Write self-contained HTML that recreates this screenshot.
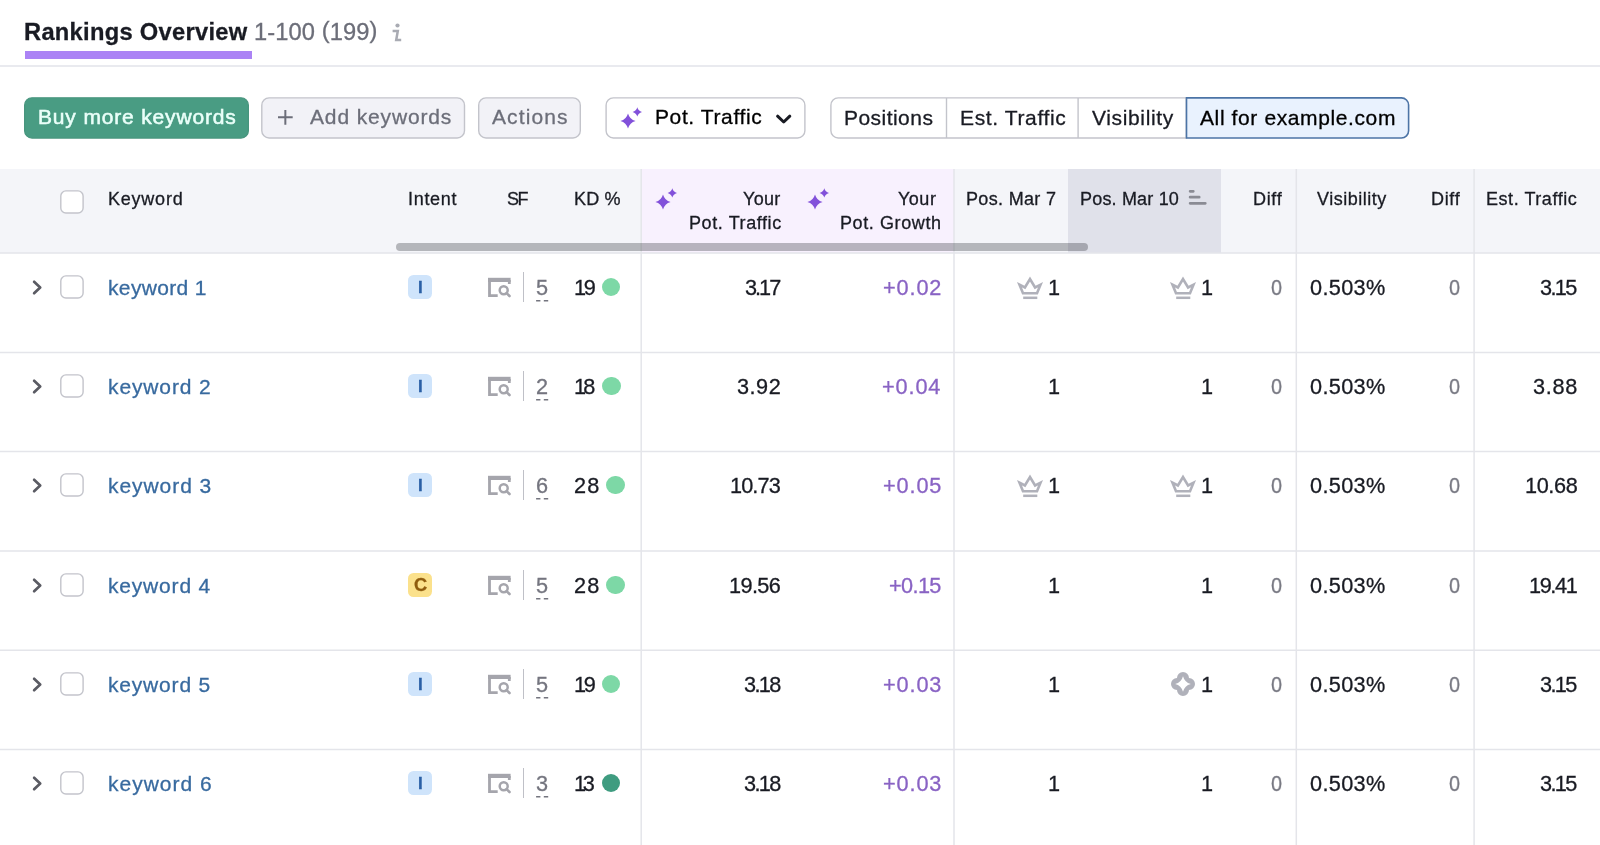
<!DOCTYPE html>
<html lang="en"><head><meta charset="utf-8"><title>Rankings Overview</title>
<style>
html,body{margin:0;padding:0;background:#fff}
body{width:1600px;height:845px;overflow:hidden;position:relative;font-family:"Liberation Sans",sans-serif;color:#191b23}
*{box-sizing:border-box}
.t{position:absolute;white-space:pre;margin:0;padding:0;text-decoration:none;will-change:transform;-webkit-text-stroke:0.3px currentColor}
.abs{position:absolute}
.btn{border:0;background:none;padding:0;margin:0;font-family:inherit;text-align:left;overflow:visible}
.badge{position:absolute;width:24px;height:24px;border-radius:5.5px}
.dot{position:absolute;width:18.4px;height:18.4px;border-radius:50%}
svg{position:absolute;overflow:visible}
</style></head>
<body>
<header><h1 class="t" style="top:18.0px;font-size:23.7px;line-height:28px;font-weight:700;letter-spacing:0.29px;left:24.3px;">Rankings Overview</h1><span class="t" style="top:18.0px;font-size:23.7px;line-height:28px;color:#6c6e79;letter-spacing:0.10px;left:254.0px;">1-100 <span style="position:relative;top:-2px">(</span>199<span style="position:relative;top:-2px">)</span></span><svg style="left:391px;top:22px" width="12" height="21" viewBox="0 0 12 21"><circle cx="6.5" cy="3.5" r="2.1" fill="#a9abb3"/><path d="M1.6 9H6.8L5.2 18H10.2" stroke="#a9abb3" stroke-width="2.5" fill="none"/></svg><div class="abs" style="left:25px;top:51px;width:227px;height:7.5px;background:#ab83f5"></div><div class="abs" style="left:0;top:65px;width:1600px;height:2px;background:#e9eaef"></div></header>
<nav><button class="btn" style="position:absolute;left:24px;top:97px;width:225px;height:42px"><svg width="225" height="42" viewBox="0 0 225 42" style="left:0;top:0"><rect x="0.60" y="0.75" width="223.80" height="40.30" rx="7.40" fill="#499c83" stroke="#48957e" stroke-width="1.2"/></svg><span class="t" style="top:7.0px;font-size:21px;line-height:25px;color:#eafff9;letter-spacing:0.84px;left:13.5px;-webkit-text-stroke:0.55px #eafff9;">Buy more keywords</span></button><button class="btn" style="position:absolute;left:261px;top:97px;width:205px;height:42px"><svg width="205" height="42" viewBox="0 0 205 42" style="left:0;top:0"><rect x="0.80" y="0.85" width="202.70" height="40.10" rx="7.30" fill="#f2f2f7" stroke="#c3c4cb" stroke-width="1.4"/></svg><svg style="left:16.5px;top:13.3px" width="14.7" height="14.7" viewBox="0 0 14.7 14.7"><path d="M7.35 0V14.7M0 7.35H14.7" stroke="#6c6e79" stroke-width="2" fill="none"/></svg><span class="t" style="top:7.0px;font-size:21px;line-height:25px;color:#6c6e79;letter-spacing:0.86px;left:49.0px;">Add keywords</span></button><button class="btn" style="position:absolute;left:478px;top:97px;width:103px;height:42px"><svg width="103" height="42" viewBox="0 0 103 42" style="left:0;top:0"><rect x="0.70" y="0.85" width="101.60" height="40.10" rx="7.30" fill="#f2f2f7" stroke="#c3c4cb" stroke-width="1.4"/></svg><span class="t" style="top:7.0px;font-size:21px;line-height:25px;color:#6c6e79;letter-spacing:1.10px;left:14.0px;">Actions</span></button><button class="btn" style="position:absolute;left:605px;top:97px;width:201px;height:42px"><svg width="201" height="42" viewBox="0 0 201 42" style="left:0;top:0"><rect x="1.10" y="0.85" width="198.80" height="40.10" rx="7.30" fill="#fff" stroke="#c3c4cb" stroke-width="1.4"/></svg><svg style="left:14.6px;top:9.0px" width="23" height="23" viewBox="0 0 23 23"><path d="M8.00 7.40 Q9.67 13.33 15.60 15.00 Q9.67 16.67 8.00 22.60 Q6.33 16.67 0.40 15.00 Q6.33 13.33 8.00 7.40Z M17.30 1.20 Q18.33 4.87 22.00 5.90 Q18.33 6.93 17.30 10.60 Q16.27 6.93 12.60 5.90 Q16.27 4.87 17.30 1.20Z" fill="#8251da"/></svg><span class="t" style="top:7.0px;font-size:21px;line-height:25px;letter-spacing:0.61px;left:50.0px;">Pot. Traffic</span><svg style="left:171.0px;top:17.0px" width="16" height="10" viewBox="0 0 16 10"><path d="M1.6 2.2L7.7 8L13.8 2.2" stroke="#191b23" stroke-width="3" fill="none" stroke-linecap="round" stroke-linejoin="round"/></svg></button><div role="group"><div style="position:absolute;left:830px;top:97px;width:357px;height:42px"><svg width="357" height="42" viewBox="0 0 357 42" style="left:0;top:0"><path d="M8.20 0.85 H356.30 V40.95 H8.20 A7.30 7.30 0 0 1 0.90 33.65 V8.15 A7.30 7.30 0 0 1 8.20 0.85 Z" fill="#fff" stroke="#c3c4cb" stroke-width="1.4"/></svg><span class="t" style="top:8.0px;font-size:21px;line-height:25px;letter-spacing:0.46px;left:14.0px;">Positions</span><svg style="left:115.0px;top:1.0px" width="3" height="40" viewBox="0 0 3 40"><path d="M1.5 0V40" stroke="#c3c4cb" stroke-width="1.4"/></svg><span class="t" style="top:8.0px;font-size:21px;line-height:25px;letter-spacing:0.63px;left:129.6px;">Est. Traffic</span><svg style="left:246.0px;top:1.0px" width="4" height="40" viewBox="0 0 4 40"><path d="M2.1 0V40" stroke="#c3c4cb" stroke-width="1.4"/></svg><span class="t" style="top:8.0px;font-size:21px;line-height:25px;letter-spacing:0.64px;left:261.5px;">Visibility</span></div><button class="btn" style="position:absolute;left:1185px;top:97px;width:225px;height:42px"><svg width="225" height="42" viewBox="0 0 225 42" style="left:0;top:0"><path d="M1.50 0.85 H216.40 A7.20 7.20 0 0 1 223.60 8.05 V33.75 A7.20 7.20 0 0 1 216.40 40.95 H1.50 V0.85 Z" fill="#e9f2fe" stroke="#4c74a6" stroke-width="1.6"/></svg><span class="t" style="top:8.0px;font-size:21px;line-height:25px;letter-spacing:0.61px;left:15.0px;">All for example.com</span></button></div></nav>
<main><div class="abs" style="left:0;top:169px;width:1600px;height:84px;background:#f4f5f9"></div><div class="abs" style="left:641px;top:169px;width:313px;height:84px;background:#f8f1fe"></div><div class="abs" style="left:1068px;top:169px;width:153px;height:84px;background:#e0e1ea"></div><svg style="left:0;top:0" width="1600" height="845" viewBox="0 0 1600 845"><path d="M0 253.1H1600M0 352.4H1600M0 451.6H1600M0 550.9H1600M0 650.2H1600M0 749.4H1600M641.2 169V845M954.0 169V845M1296.3 169V845M1474.1 169V845" stroke="#e4e5ea" stroke-width="1.5" fill="none"/></svg><div style="position:absolute;left:60px;top:190px;width:24px;height:24px"><svg width="24" height="24" viewBox="0 0 24 24" style="left:0;top:0"><rect x="0.80" y="0.90" width="22.30" height="22.10" rx="5.10" fill="#fff" stroke="#c3c4cb" stroke-width="1.4"/></svg></div><span class="t" style="top:188.0px;font-size:18px;line-height:22px;letter-spacing:0.77px;left:108.0px;">Keyword</span><span class="t" style="top:188.0px;font-size:18px;line-height:22px;letter-spacing:0.70px;left:407.5px;">Intent</span><span class="t" style="top:188.0px;font-size:18px;line-height:22px;letter-spacing:-1.50px;left:506.5px;">SF</span><span class="t" style="top:188.0px;font-size:18px;line-height:22px;letter-spacing:0.17px;left:574.0px;">KD %</span><svg style="left:654.7px;top:186.7px" width="23" height="23" viewBox="0 0 23 23"><path d="M8.00 7.40 Q9.67 13.33 15.60 15.00 Q9.67 16.67 8.00 22.60 Q6.33 16.67 0.40 15.00 Q6.33 13.33 8.00 7.40Z M17.30 1.20 Q18.33 4.87 22.00 5.90 Q18.33 6.93 17.30 10.60 Q16.27 6.93 12.60 5.90 Q16.27 4.87 17.30 1.20Z" fill="#8251da"/></svg><span class="t" style="top:188.0px;font-size:18px;line-height:22px;letter-spacing:0.33px;left:743.0px;">Your</span><span class="t" style="top:212.0px;font-size:18px;line-height:22px;letter-spacing:0.59px;left:688.5px;">Pot. Traffic</span><svg style="left:806.5px;top:186.7px" width="23" height="23" viewBox="0 0 23 23"><path d="M8.00 7.40 Q9.67 13.33 15.60 15.00 Q9.67 16.67 8.00 22.60 Q6.33 16.67 0.40 15.00 Q6.33 13.33 8.00 7.40Z M17.30 1.20 Q18.33 4.87 22.00 5.90 Q18.33 6.93 17.30 10.60 Q16.27 6.93 12.60 5.90 Q16.27 4.87 17.30 1.20Z" fill="#8251da"/></svg><span class="t" style="top:188.0px;font-size:18px;line-height:22px;letter-spacing:0.50px;left:897.5px;">Your</span><span class="t" style="top:212.0px;font-size:18px;line-height:22px;letter-spacing:0.60px;left:840.0px;">Pot. Growth</span><span class="t" style="top:188.0px;font-size:18px;line-height:22px;letter-spacing:0.33px;left:965.5px;">Pos. Mar 7</span><span class="t" style="top:188.0px;font-size:18px;line-height:22px;letter-spacing:0.18px;left:1079.5px;">Pos. Mar 10</span><svg style="left:1188.7px;top:190px" width="18" height="15" viewBox="0 0 18 15"><path d="M1.1 1.3H4.3M1.1 7.2H10.2M1.1 13.3H16.3" stroke="#8a8b94" stroke-width="2.7" stroke-linecap="round" fill="none"/></svg><span class="t" style="top:188.0px;font-size:18px;line-height:22px;letter-spacing:0.67px;left:1253.0px;">Diff</span><span class="t" style="top:188.0px;font-size:18px;line-height:22px;letter-spacing:0.50px;left:1316.5px;">Visibility</span><span class="t" style="top:188.0px;font-size:18px;line-height:22px;letter-spacing:0.67px;left:1431.0px;">Diff</span><span class="t" style="top:188.0px;font-size:18px;line-height:22px;letter-spacing:0.55px;left:1486.0px;">Est. Traffic</span><div class="abs" style="left:396px;top:242.5px;width:692px;height:8.5px;border-radius:5px;background:rgba(25,27,35,.29)"></div><section><svg style="left:32px;top:280px" width="11" height="15" viewBox="0 0 11 15"><path d="M2.1 1.8L8.2 7.5L2.1 13.2" stroke="#5a5b63" stroke-width="2.7" fill="none" stroke-linecap="round" stroke-linejoin="round"/></svg><div style="position:absolute;left:60px;top:275px;width:24px;height:24px"><svg width="24" height="24" viewBox="0 0 24 24" style="left:0;top:0"><rect x="0.80" y="0.90" width="22.30" height="22.10" rx="5.10" fill="#fff" stroke="#c3c4cb" stroke-width="1.4"/></svg></div><a class="t" style="top:275.0px;font-size:21px;line-height:25px;color:#386a9f;letter-spacing:0.35px;left:108.0px;">keyword 1</a><div class="badge" style="left:408px;top:275px;background:#cfe4fb"></div><span class="t" style="top:278.0px;font-size:17px;line-height:20px;color:#2a5fa5;font-weight:700;left:417.6px;">I</span><svg style="left:488px;top:278px" width="23" height="19" viewBox="0 0 23 19"><path d="M0 1.9H22.6" stroke="#a5a5ac" stroke-width="4.2"/><path d="M1.5 2V17.6H9.7M21.3 2V6" stroke="#a5a5ac" stroke-width="2.8" fill="none"/><circle cx="15.7" cy="12.2" r="4" stroke="#a5a5ac" stroke-width="2.5" fill="none"/><path d="M18.6 15.1L21.5 18" stroke="#a5a5ac" stroke-width="2.6" stroke-linecap="round"/></svg><div class="abs" style="left:523px;top:272px;width:1px;height:30px;background:#bfc0c7"></div><span class="t" style="top:275.0px;font-size:21.7px;line-height:26px;color:#74757f;left:535.7px;">5</span><svg style="left:536px;top:300px" width="13" height="2" viewBox="0 0 13 2"><path d="M0.1 0.8H4.4M7.8 0.8H12.2" stroke="#74757f" stroke-width="1.6"/></svg><span class="t" style="top:275.0px;font-size:21.7px;line-height:26px;letter-spacing:-2.30px;left:573.8px;">19</span><div class="dot" style="left:601.8px;top:278.1px;background:#7dd8a6"></div><span class="t" style="top:275.0px;font-size:21.7px;line-height:26px;letter-spacing:-2.00px;left:744.5px;">3.17</span><span class="t" style="top:275.0px;font-size:21.7px;line-height:26px;color:#8963c4;letter-spacing:0.88px;left:882.5px;">+0.02</span><svg style="left:1018px;top:277px" width="24" height="22" viewBox="0 0 24 22"><path d="M1.5 7.7 L6.9 10.5 L12 2.1 L17.1 10.5 L22.5 7.7 L19 16.3 H5 Z" fill="none" stroke="#b0b1ba" stroke-width="2.6" stroke-linejoin="miter"/><path d="M5.2 20.8H19.3" stroke="#b0b1ba" stroke-width="2.5" fill="none"/></svg><span class="t" style="top:275.0px;font-size:21.7px;line-height:26px;left:1047.7px;">1</span><svg style="left:1171px;top:277px" width="24" height="22" viewBox="0 0 24 22"><path d="M1.5 7.7 L6.9 10.5 L12 2.1 L17.1 10.5 L22.5 7.7 L19 16.3 H5 Z" fill="none" stroke="#b0b1ba" stroke-width="2.6" stroke-linejoin="miter"/><path d="M5.2 20.8H19.3" stroke="#b0b1ba" stroke-width="2.5" fill="none"/></svg><span class="t" style="top:275.0px;font-size:21.7px;line-height:26px;left:1200.6px;">1</span><span class="t" style="top:275.0px;font-size:21.7px;line-height:26px;color:#74757f;left:1271.0px;transform:scaleX(0.917);transform-origin:0 0;">0</span><span class="t" style="top:275.0px;font-size:21.7px;line-height:26px;letter-spacing:0.34px;left:1310.0px;">0.503%</span><span class="t" style="top:275.0px;font-size:21.7px;line-height:26px;color:#74757f;left:1449.0px;transform:scaleX(0.917);transform-origin:0 0;">0</span><span class="t" style="top:275.0px;font-size:21.7px;line-height:26px;letter-spacing:-1.67px;left:1540.0px;">3.15</span></section>
<section><svg style="left:32px;top:379px" width="11" height="15" viewBox="0 0 11 15"><path d="M2.1 1.8L8.2 7.5L2.1 13.2" stroke="#5a5b63" stroke-width="2.7" fill="none" stroke-linecap="round" stroke-linejoin="round"/></svg><div style="position:absolute;left:60px;top:374px;width:24px;height:24px"><svg width="24" height="24" viewBox="0 0 24 24" style="left:0;top:0"><rect x="0.80" y="0.90" width="22.30" height="22.10" rx="5.10" fill="#fff" stroke="#c3c4cb" stroke-width="1.4"/></svg></div><a class="t" style="top:374.0px;font-size:21px;line-height:25px;color:#386a9f;letter-spacing:0.88px;left:108.0px;">keyword 2</a><div class="badge" style="left:408px;top:374px;background:#cfe4fb"></div><span class="t" style="top:377.0px;font-size:17px;line-height:20px;color:#2a5fa5;font-weight:700;left:417.6px;">I</span><svg style="left:488px;top:377px" width="23" height="19" viewBox="0 0 23 19"><path d="M0 1.9H22.6" stroke="#a5a5ac" stroke-width="4.2"/><path d="M1.5 2V17.6H9.7M21.3 2V6" stroke="#a5a5ac" stroke-width="2.8" fill="none"/><circle cx="15.7" cy="12.2" r="4" stroke="#a5a5ac" stroke-width="2.5" fill="none"/><path d="M18.6 15.1L21.5 18" stroke="#a5a5ac" stroke-width="2.6" stroke-linecap="round"/></svg><div class="abs" style="left:523px;top:371px;width:1px;height:30px;background:#bfc0c7"></div><span class="t" style="top:374.0px;font-size:21.7px;line-height:26px;color:#74757f;left:535.7px;">2</span><svg style="left:536px;top:399px" width="13" height="2" viewBox="0 0 13 2"><path d="M0.1 0.8H4.4M7.8 0.8H12.2" stroke="#74757f" stroke-width="1.6"/></svg><span class="t" style="top:374.0px;font-size:21.7px;line-height:26px;letter-spacing:-2.80px;left:573.8px;">18</span><div class="dot" style="left:602.3px;top:377.1px;background:#7dd8a6"></div><span class="t" style="top:374.0px;font-size:21.7px;line-height:26px;letter-spacing:0.50px;left:737.0px;">3.92</span><span class="t" style="top:374.0px;font-size:21.7px;line-height:26px;color:#8963c4;letter-spacing:0.88px;left:881.5px;">+0.04</span><span class="t" style="top:374.0px;font-size:21.7px;line-height:26px;left:1047.7px;">1</span><span class="t" style="top:374.0px;font-size:21.7px;line-height:26px;left:1200.6px;">1</span><span class="t" style="top:374.0px;font-size:21.7px;line-height:26px;color:#74757f;left:1271.0px;transform:scaleX(0.917);transform-origin:0 0;">0</span><span class="t" style="top:374.0px;font-size:21.7px;line-height:26px;letter-spacing:0.34px;left:1310.0px;">0.503%</span><span class="t" style="top:374.0px;font-size:21.7px;line-height:26px;color:#74757f;left:1449.0px;transform:scaleX(0.917);transform-origin:0 0;">0</span><span class="t" style="top:374.0px;font-size:21.7px;line-height:26px;letter-spacing:0.67px;left:1533.0px;">3.88</span></section>
<section><svg style="left:32px;top:478px" width="11" height="15" viewBox="0 0 11 15"><path d="M2.1 1.8L8.2 7.5L2.1 13.2" stroke="#5a5b63" stroke-width="2.7" fill="none" stroke-linecap="round" stroke-linejoin="round"/></svg><div style="position:absolute;left:60px;top:473px;width:24px;height:24px"><svg width="24" height="24" viewBox="0 0 24 24" style="left:0;top:0"><rect x="0.80" y="0.90" width="22.30" height="22.10" rx="5.10" fill="#fff" stroke="#c3c4cb" stroke-width="1.4"/></svg></div><a class="t" style="top:473.0px;font-size:21px;line-height:25px;color:#386a9f;letter-spacing:0.94px;left:108.0px;">keyword 3</a><div class="badge" style="left:408px;top:473px;background:#cfe4fb"></div><span class="t" style="top:476.0px;font-size:17px;line-height:20px;color:#2a5fa5;font-weight:700;left:417.6px;">I</span><svg style="left:488px;top:476px" width="23" height="19" viewBox="0 0 23 19"><path d="M0 1.9H22.6" stroke="#a5a5ac" stroke-width="4.2"/><path d="M1.5 2V17.6H9.7M21.3 2V6" stroke="#a5a5ac" stroke-width="2.8" fill="none"/><circle cx="15.7" cy="12.2" r="4" stroke="#a5a5ac" stroke-width="2.5" fill="none"/><path d="M18.6 15.1L21.5 18" stroke="#a5a5ac" stroke-width="2.6" stroke-linecap="round"/></svg><div class="abs" style="left:523px;top:470px;width:1px;height:30px;background:#bfc0c7"></div><span class="t" style="top:473.0px;font-size:21.7px;line-height:26px;color:#74757f;left:535.7px;">6</span><svg style="left:536px;top:498px" width="13" height="2" viewBox="0 0 13 2"><path d="M0.1 0.8H4.4M7.8 0.8H12.2" stroke="#74757f" stroke-width="1.6"/></svg><span class="t" style="top:473.0px;font-size:21.7px;line-height:26px;letter-spacing:1.20px;left:573.8px;">28</span><div class="dot" style="left:606.3px;top:476.1px;background:#7dd8a6"></div><span class="t" style="top:473.0px;font-size:21.7px;line-height:26px;letter-spacing:-0.88px;left:730.0px;">10.73</span><span class="t" style="top:473.0px;font-size:21.7px;line-height:26px;color:#8963c4;letter-spacing:0.88px;left:882.5px;">+0.05</span><svg style="left:1018px;top:475px" width="24" height="22" viewBox="0 0 24 22"><path d="M1.5 7.7 L6.9 10.5 L12 2.1 L17.1 10.5 L22.5 7.7 L19 16.3 H5 Z" fill="none" stroke="#b0b1ba" stroke-width="2.6" stroke-linejoin="miter"/><path d="M5.2 20.8H19.3" stroke="#b0b1ba" stroke-width="2.5" fill="none"/></svg><span class="t" style="top:473.0px;font-size:21.7px;line-height:26px;left:1047.7px;">1</span><svg style="left:1171px;top:475px" width="24" height="22" viewBox="0 0 24 22"><path d="M1.5 7.7 L6.9 10.5 L12 2.1 L17.1 10.5 L22.5 7.7 L19 16.3 H5 Z" fill="none" stroke="#b0b1ba" stroke-width="2.6" stroke-linejoin="miter"/><path d="M5.2 20.8H19.3" stroke="#b0b1ba" stroke-width="2.5" fill="none"/></svg><span class="t" style="top:473.0px;font-size:21.7px;line-height:26px;left:1200.6px;">1</span><span class="t" style="top:473.0px;font-size:21.7px;line-height:26px;color:#74757f;left:1271.0px;transform:scaleX(0.917);transform-origin:0 0;">0</span><span class="t" style="top:473.0px;font-size:21.7px;line-height:26px;letter-spacing:0.34px;left:1310.0px;">0.503%</span><span class="t" style="top:473.0px;font-size:21.7px;line-height:26px;color:#74757f;left:1449.0px;transform:scaleX(0.917);transform-origin:0 0;">0</span><span class="t" style="top:473.0px;font-size:21.7px;line-height:26px;letter-spacing:-0.38px;left:1524.5px;">10.68</span></section>
<section><svg style="left:32px;top:578px" width="11" height="15" viewBox="0 0 11 15"><path d="M2.1 1.8L8.2 7.5L2.1 13.2" stroke="#5a5b63" stroke-width="2.7" fill="none" stroke-linecap="round" stroke-linejoin="round"/></svg><div style="position:absolute;left:60px;top:573px;width:24px;height:24px"><svg width="24" height="24" viewBox="0 0 24 24" style="left:0;top:0"><rect x="0.80" y="0.90" width="22.30" height="22.10" rx="5.10" fill="#fff" stroke="#c3c4cb" stroke-width="1.4"/></svg></div><a class="t" style="top:573.0px;font-size:21px;line-height:25px;color:#386a9f;letter-spacing:0.81px;left:108.0px;">keyword 4</a><div class="badge" style="left:408px;top:573px;background:#fbe18c"></div><span class="t" style="top:574.0px;font-size:18.2px;line-height:22px;color:#8f5c0e;font-weight:700;left:414.0px;">C</span><svg style="left:488px;top:576px" width="23" height="19" viewBox="0 0 23 19"><path d="M0 1.9H22.6" stroke="#a5a5ac" stroke-width="4.2"/><path d="M1.5 2V17.6H9.7M21.3 2V6" stroke="#a5a5ac" stroke-width="2.8" fill="none"/><circle cx="15.7" cy="12.2" r="4" stroke="#a5a5ac" stroke-width="2.5" fill="none"/><path d="M18.6 15.1L21.5 18" stroke="#a5a5ac" stroke-width="2.6" stroke-linecap="round"/></svg><div class="abs" style="left:523px;top:570px;width:1px;height:30px;background:#bfc0c7"></div><span class="t" style="top:573.0px;font-size:21.7px;line-height:26px;color:#74757f;left:535.7px;">5</span><svg style="left:536px;top:598px" width="13" height="2" viewBox="0 0 13 2"><path d="M0.1 0.8H4.4M7.8 0.8H12.2" stroke="#74757f" stroke-width="1.6"/></svg><span class="t" style="top:573.0px;font-size:21.7px;line-height:26px;letter-spacing:1.20px;left:573.8px;">28</span><div class="dot" style="left:606.3px;top:576.1px;background:#7dd8a6"></div><span class="t" style="top:573.0px;font-size:21.7px;line-height:26px;letter-spacing:-0.62px;left:729.0px;">19.56</span><span class="t" style="top:573.0px;font-size:21.7px;line-height:26px;color:#8963c4;letter-spacing:-0.62px;left:888.5px;">+0.15</span><span class="t" style="top:573.0px;font-size:21.7px;line-height:26px;left:1047.7px;">1</span><span class="t" style="top:573.0px;font-size:21.7px;line-height:26px;left:1200.6px;">1</span><span class="t" style="top:573.0px;font-size:21.7px;line-height:26px;color:#74757f;left:1271.0px;transform:scaleX(0.917);transform-origin:0 0;">0</span><span class="t" style="top:573.0px;font-size:21.7px;line-height:26px;letter-spacing:0.34px;left:1310.0px;">0.503%</span><span class="t" style="top:573.0px;font-size:21.7px;line-height:26px;color:#74757f;left:1449.0px;transform:scaleX(0.917);transform-origin:0 0;">0</span><span class="t" style="top:573.0px;font-size:21.7px;line-height:26px;letter-spacing:-1.38px;left:1528.5px;">19.41</span></section>
<section><svg style="left:32px;top:677px" width="11" height="15" viewBox="0 0 11 15"><path d="M2.1 1.8L8.2 7.5L2.1 13.2" stroke="#5a5b63" stroke-width="2.7" fill="none" stroke-linecap="round" stroke-linejoin="round"/></svg><div style="position:absolute;left:60px;top:672px;width:24px;height:24px"><svg width="24" height="24" viewBox="0 0 24 24" style="left:0;top:0"><rect x="0.80" y="0.90" width="22.30" height="22.10" rx="5.10" fill="#fff" stroke="#c3c4cb" stroke-width="1.4"/></svg></div><a class="t" style="top:672.0px;font-size:21px;line-height:25px;color:#386a9f;letter-spacing:0.81px;left:108.0px;">keyword 5</a><div class="badge" style="left:408px;top:672px;background:#cfe4fb"></div><span class="t" style="top:675.0px;font-size:17px;line-height:20px;color:#2a5fa5;font-weight:700;left:417.6px;">I</span><svg style="left:488px;top:675px" width="23" height="19" viewBox="0 0 23 19"><path d="M0 1.9H22.6" stroke="#a5a5ac" stroke-width="4.2"/><path d="M1.5 2V17.6H9.7M21.3 2V6" stroke="#a5a5ac" stroke-width="2.8" fill="none"/><circle cx="15.7" cy="12.2" r="4" stroke="#a5a5ac" stroke-width="2.5" fill="none"/><path d="M18.6 15.1L21.5 18" stroke="#a5a5ac" stroke-width="2.6" stroke-linecap="round"/></svg><div class="abs" style="left:523px;top:669px;width:1px;height:30px;background:#bfc0c7"></div><span class="t" style="top:672.0px;font-size:21.7px;line-height:26px;color:#74757f;left:535.7px;">5</span><svg style="left:536px;top:697px" width="13" height="2" viewBox="0 0 13 2"><path d="M0.1 0.8H4.4M7.8 0.8H12.2" stroke="#74757f" stroke-width="1.6"/></svg><span class="t" style="top:672.0px;font-size:21.7px;line-height:26px;letter-spacing:-2.30px;left:573.8px;">19</span><div class="dot" style="left:601.8px;top:675.1px;background:#7dd8a6"></div><span class="t" style="top:672.0px;font-size:21.7px;line-height:26px;letter-spacing:-1.67px;left:743.5px;">3.18</span><span class="t" style="top:672.0px;font-size:21.7px;line-height:26px;color:#8963c4;letter-spacing:0.88px;left:882.5px;">+0.03</span><span class="t" style="top:672.0px;font-size:21.7px;line-height:26px;left:1047.7px;">1</span><svg style="left:1171px;top:672px" width="24" height="24" viewBox="0 0 24 24"><path d="M18.00 6.00 A6.0 6.0 0 1 1 18.00 18.00 A6.0 6.0 0 1 1 6.00 18.00 A6.0 6.0 0 1 1 6.00 6.00 A6.0 6.0 0 1 1 18.00 6.00 Z M12.00 4.20 Q13.64 10.36 19.80 12.00 Q13.64 13.64 12.00 19.80 Q10.36 13.64 4.20 12.00 Q10.36 10.36 12.00 4.20Z" fill="#b0b1ba" fill-rule="evenodd"/></svg><span class="t" style="top:672.0px;font-size:21.7px;line-height:26px;left:1200.6px;">1</span><span class="t" style="top:672.0px;font-size:21.7px;line-height:26px;color:#74757f;left:1271.0px;transform:scaleX(0.917);transform-origin:0 0;">0</span><span class="t" style="top:672.0px;font-size:21.7px;line-height:26px;letter-spacing:0.34px;left:1310.0px;">0.503%</span><span class="t" style="top:672.0px;font-size:21.7px;line-height:26px;color:#74757f;left:1449.0px;transform:scaleX(0.917);transform-origin:0 0;">0</span><span class="t" style="top:672.0px;font-size:21.7px;line-height:26px;letter-spacing:-1.67px;left:1540.0px;">3.15</span></section>
<section><svg style="left:32px;top:776px" width="11" height="15" viewBox="0 0 11 15"><path d="M2.1 1.8L8.2 7.5L2.1 13.2" stroke="#5a5b63" stroke-width="2.7" fill="none" stroke-linecap="round" stroke-linejoin="round"/></svg><div style="position:absolute;left:60px;top:771px;width:24px;height:24px"><svg width="24" height="24" viewBox="0 0 24 24" style="left:0;top:0"><rect x="0.80" y="0.90" width="22.30" height="22.10" rx="5.10" fill="#fff" stroke="#c3c4cb" stroke-width="1.4"/></svg></div><a class="t" style="top:771.0px;font-size:21px;line-height:25px;color:#386a9f;letter-spacing:1.00px;left:108.0px;">keyword 6</a><div class="badge" style="left:408px;top:771px;background:#cfe4fb"></div><span class="t" style="top:774.0px;font-size:17px;line-height:20px;color:#2a5fa5;font-weight:700;left:417.6px;">I</span><svg style="left:488px;top:774px" width="23" height="19" viewBox="0 0 23 19"><path d="M0 1.9H22.6" stroke="#a5a5ac" stroke-width="4.2"/><path d="M1.5 2V17.6H9.7M21.3 2V6" stroke="#a5a5ac" stroke-width="2.8" fill="none"/><circle cx="15.7" cy="12.2" r="4" stroke="#a5a5ac" stroke-width="2.5" fill="none"/><path d="M18.6 15.1L21.5 18" stroke="#a5a5ac" stroke-width="2.6" stroke-linecap="round"/></svg><div class="abs" style="left:523px;top:768px;width:1px;height:30px;background:#bfc0c7"></div><span class="t" style="top:771.0px;font-size:21.7px;line-height:26px;color:#74757f;left:535.7px;">3</span><svg style="left:536px;top:796px" width="13" height="2" viewBox="0 0 13 2"><path d="M0.1 0.8H4.4M7.8 0.8H12.2" stroke="#74757f" stroke-width="1.6"/></svg><span class="t" style="top:771.0px;font-size:21.7px;line-height:26px;letter-spacing:-3.30px;left:573.8px;">13</span><div class="dot" style="left:601.8px;top:774.1px;background:#3f9c80"></div><span class="t" style="top:771.0px;font-size:21.7px;line-height:26px;letter-spacing:-1.67px;left:743.5px;">3.18</span><span class="t" style="top:771.0px;font-size:21.7px;line-height:26px;color:#8963c4;letter-spacing:0.88px;left:882.5px;">+0.03</span><span class="t" style="top:771.0px;font-size:21.7px;line-height:26px;left:1047.7px;">1</span><span class="t" style="top:771.0px;font-size:21.7px;line-height:26px;left:1200.6px;">1</span><span class="t" style="top:771.0px;font-size:21.7px;line-height:26px;color:#74757f;left:1271.0px;transform:scaleX(0.917);transform-origin:0 0;">0</span><span class="t" style="top:771.0px;font-size:21.7px;line-height:26px;letter-spacing:0.34px;left:1310.0px;">0.503%</span><span class="t" style="top:771.0px;font-size:21.7px;line-height:26px;color:#74757f;left:1449.0px;transform:scaleX(0.917);transform-origin:0 0;">0</span><span class="t" style="top:771.0px;font-size:21.7px;line-height:26px;letter-spacing:-1.67px;left:1540.0px;">3.15</span></section>
</main>
</body></html>
